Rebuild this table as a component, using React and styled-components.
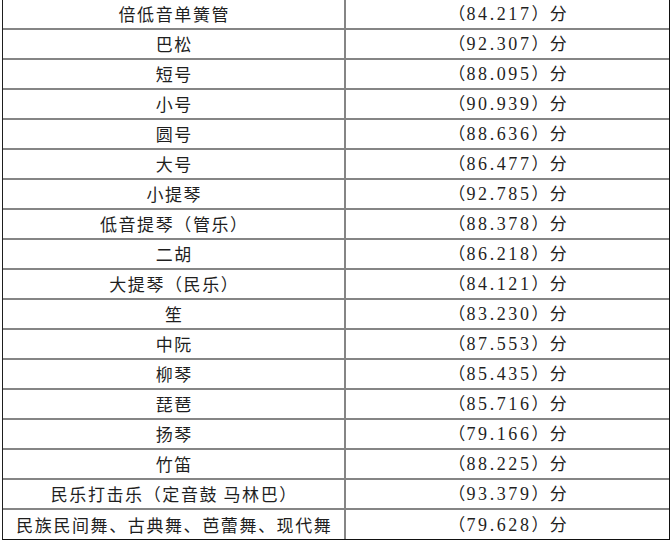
import React from "react";
import styled, { createGlobalStyle } from "styled-components";

const Global = createGlobalStyle`
  html, body { margin: 0; padding: 0; background: #ffffff; }
  body { font-family: "Noto Sans CJK SC", "Liberation Serif", serif; }
`;

const rows = [
  ["倍低音单簧管", "84.217"],
  ["巴松", "92.307"],
  ["短号", "88.095"],
  ["小号", "90.939"],
  ["圆号", "88.636"],
  ["大号", "86.477"],
  ["小提琴", "92.785"],
  ["低音提琴（管乐）", "88.378"],
  ["二胡", "86.218"],
  ["大提琴（民乐）", "84.121"],
  ["笙", "83.230"],
  ["中阮", "87.553"],
  ["柳琴", "85.435"],
  ["琵琶", "85.716"],
  ["扬琴", "79.166"],
  ["竹笛", "88.225"],
  ["民乐打击乐（定音鼓 马林巴）", "93.379"],
  ["民族民间舞、古典舞、芭蕾舞、现代舞", "79.628"],
];

const Table = styled.div`
  display: grid;
  grid-template-columns: 343px 323px;
  width: 668px;
  margin-left: 2px;
  border-left: 1px solid #1e1e1e;
  border-right: 1px solid #111;
  border-bottom: 1px solid #111;
  box-sizing: border-box;
`;

const Cell = styled.div`
  box-sizing: border-box;
  height: ${(p) => (p.$last ? 29 : 30)}px;
  border-bottom: ${(p) => (p.$last ? "none" : "2px solid #858585")};
  border-right: ${(p) => (p.$left ? "2px solid #858585" : "none")};
  display: flex;
  align-items: center;
  justify-content: center;
  padding-bottom: 1px;
  color: #1f1f1f;
  white-space: nowrap;
`;

const Name = styled.span`
  font-family: "Noto Sans CJK SC", sans-serif;
  font-size: 17px;
  letter-spacing: 1.6px;
  padding-left: 1.6px;
  line-height: 1;
`;

const Score = styled.span`
  font-family: "Noto Sans CJK SC", sans-serif;
  font-size: 17px;
  letter-spacing: 1.2px;
  padding-left: 1.2px;
  line-height: 1;
  display: inline-flex;
  align-items: baseline;
`;

const Num = styled.span`
  font-family: "Liberation Serif", serif;
  font-size: 18px;
  letter-spacing: 2.6px;
`;

export default function App() {
  return (
    <>
      <Global />
      <Table>
        {rows.map(([name, score], i) => {
          const last = i === rows.length - 1;
          return (
            <React.Fragment key={name}>
              <Cell $left $last={last}>
                <Name>{name}</Name>
              </Cell>
              <Cell $last={last}>
                <Score>
                  （<Num>{score}</Num>）分
                </Score>
              </Cell>
            </React.Fragment>
          );
        })}
      </Table>
    </>
  );
}
